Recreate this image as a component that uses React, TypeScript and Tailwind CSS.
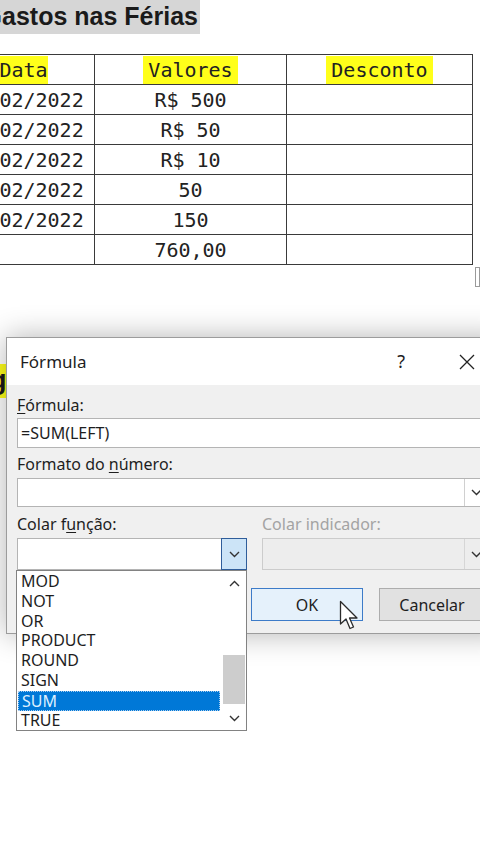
import React from "react";

const mono = { fontFamily: '"DejaVu Sans Mono", "Liberation Mono", monospace' };
const ui = { fontFamily: '"Noto Sans", "Open Sans", sans-serif' };
const titulo = { fontFamily: '"Liberation Sans", Arial, sans-serif' };

const rows = [
  { data: "01/02/2022", valor: "R$ 500" },
  { data: "05/02/2022", valor: "R$ 50" },
  { data: "09/02/2022", valor: "R$ 10" },
  { data: "14/02/2022", valor: "50" },
  { data: "20/02/2022", valor: "150" },
  { data: "", valor: "760,00" },
];

const funcoes = ["MOD", "NOT", "OR", "PRODUCT", "ROUND", "SIGN", "SUM", "TRUE"];

const Chevron: React.FC<{ up?: boolean; className?: string }> = ({ up, className }) => (
  <svg width="11" height="7" viewBox="0 0 11 7" className={className}>
    <path
      d={up ? "M1 6 L5.5 1.5 L10 6" : "M1 1 L5.5 5.5 L10 1"}
      fill="none"
      stroke="#333"
      strokeWidth="1.4"
    />
  </svg>
);

const Planilha: React.FC = () => (
  <div>
    <div className="flex justify-end overflow-hidden w-[200px] h-[34px] bg-[#d6d6d6] items-center">
      <span className="text-[25px] font-bold text-[#1a1a1a] whitespace-nowrap pr-[2px] shrink-0" style={titulo}>
        Gastos nas Férias
      </span>
    </div>

    <div className="mt-[20px] flex items-end">
      <table className="table-fixed w-[520px] border-collapse ml-[-48px] text-[20px] leading-[24px] text-[#222]" style={mono}>
        <colgroup>
          <col className="w-[142px]" />
          <col className="w-[192px]" />
          <col className="w-[186px]" />
        </colgroup>
        <thead>
          <tr className="h-[30px]">
            <th className="border border-[#3a3a3a] font-normal p-0">
              <span className="bg-[#ffff1a] py-[2px]">Data</span>
            </th>
            <th className="border border-[#3a3a3a] font-normal p-0">
              <span className="bg-[#ffff1a] px-[5px] py-[2px]">Valores</span>
            </th>
            <th className="border border-[#3a3a3a] font-normal p-0">
              <span className="bg-[#ffff1a] px-[5px] py-[2px]">Desconto</span>
            </th>
          </tr>
        </thead>
        <tbody>
          {rows.map((r, i) => (
            <tr key={i} className="h-[30px]">
              <td className="border border-[#3a3a3a] p-0 text-center whitespace-nowrap">{r.data}</td>
              <td className="border border-[#3a3a3a] p-0 text-center whitespace-nowrap">{r.valor}</td>
              <td className="border border-[#3a3a3a] p-0"></td>
            </tr>
          ))}
        </tbody>
      </table>
      <div className="ml-[2px] mb-[-22px] w-[8px] h-[20px] border border-[#9a9a9a] bg-white" />
    </div>
  </div>
);

const Dialogo: React.FC = () => (
  <div
    className="absolute left-[6px] top-[337px] w-[500px] h-[297px] border border-[#9c9c9c] bg-[#f0f0f0] shadow-[0_0_28px_rgba(0,0,0,0.3)] text-[16px] text-[#1e1e1e]"
    style={ui}
  >
    {/* barra de título */}
    <div className="h-[47px] bg-white flex items-center pl-[13px] pr-[30px]">
      <span className="text-[17px] flex-1">Fórmula</span>
      <span className="text-[18px] mr-[54px]">?</span>
      <svg width="16" height="16" viewBox="0 0 16 16">
        <path d="M1 1 L15 15 M15 1 L1 15" stroke="#222" strokeWidth="1.3" />
      </svg>
    </div>

    <div className="pl-[10px] pt-[10px]">
      <div className="leading-[20px]">
        <span className="underline underline-offset-2">F</span>órmula:
      </div>
      <div className="mt-[3px] h-[30px] bg-white border border-[#b4b4b4] flex items-center pl-[3px]">
        =SUM(LEFT)
      </div>

      <div className="mt-[6px] leading-[20px]">
        Formato do <span className="underline underline-offset-2">n</span>úmero:
      </div>
      <div className="mt-[4px] h-[29px] bg-white border border-[#b4b4b4] flex justify-end">
        <div className="w-[40px] border-l border-[#d0d0d0] flex items-center pl-[6px]">
          <Chevron />
        </div>
      </div>

      <div className="mt-[7px] flex leading-[20px]">
        <div className="w-[245px]">
          Colar f<span className="underline underline-offset-2">u</span>nção:
        </div>
        <div className="text-[#a3a3a3]">Colar indicador:</div>
      </div>

      <div className="mt-[4px] flex">
        <div className="w-[230px] h-[32px] bg-white border border-[#b4b4b4] flex justify-end">
          <div className="w-[26px] bg-[#cce4f7] border border-[#2f5d9a] flex items-center justify-center mt-[-1px] mr-[-1px] h-[32px]">
            <Chevron />
          </div>
        </div>
        <div className="ml-[15px] flex-1 h-[32px] bg-[#ededed] border border-[#cccccc] flex justify-end">
          <div className="w-[40px] border-l border-[#d6d6d6] flex items-center pl-[6px]">
            <Chevron />
          </div>
        </div>
      </div>

      <div className="mt-[18px] flex">
        <div className="ml-[234px] w-[112px] h-[33px] bg-[#e5f1fb] border border-[#3d7bc8] flex items-center justify-center">
          OK
        </div>
        <div className="ml-[16px] w-[120px] h-[33px] bg-[#e1e1e1] border border-[#adadad] flex items-center justify-center pr-[14px]">
          Cancelar
        </div>
      </div>
    </div>
  </div>
);

const ListaFuncoes: React.FC = () => (
  <div
    className="absolute left-[16px] top-[570px] w-[231px] h-[161px] bg-white border border-[#828282] flex text-[16px] text-[#1e1e1e]"
    style={ui}
  >
    <div className="flex-1 pt-[1px]">
      {funcoes.map((f) => (
        <div
          key={f}
          className={
            f === "SUM"
              ? "h-[19.8px] leading-[18px] pl-[3px] bg-[#0078d7] text-[#dcefff] border border-dotted border-[#a8cdf0] ml-[1px] mr-[2px]"
              : "h-[19.8px] leading-[19.8px] pl-[4px]"
          }
        >
          {f}
        </div>
      ))}
    </div>
    <div className="w-[24px] flex flex-col items-center bg-white">
      <div className="h-[24px] flex items-center justify-center">
        <Chevron up />
      </div>
      <div className="flex-1 w-full flex flex-col justify-end">
        <div className="h-[49px] w-[22px] ml-[1px] bg-[#cdcdcd] mb-[2px]" />
      </div>
      <div className="h-[24px] flex items-center justify-center">
        <Chevron />
      </div>
    </div>
  </div>
);

const Cursor: React.FC = () => (
  <svg
    className="absolute left-[339px] top-[600px]"
    width="20"
    height="32"
    viewBox="0 0 20 32"
  >
    <path
      d="M1.5 1.5 L1.5 24 L7 19 L11 28.5 L14.5 27 L10.5 18 L18 18 Z"
      fill="#ffffff"
      stroke="#2a2a2a"
      strokeWidth="1.3"
      strokeLinejoin="round"
    />
  </svg>
);

const App: React.FC = () => {
  return (
    <div className="relative w-[480px] h-[854px] overflow-hidden bg-white">
      <Planilha />

      {/* pedaço do título de baixo, coberto pela caixa de diálogo */}
      <div className="absolute left-0 top-[364px] w-[8px] h-[34px] bg-[#ffff1a] overflow-hidden">
        <span className="absolute left-[-10px] top-[-4px] text-[27px] font-bold text-[#1a1a1a]" style={titulo}>
          g
        </span>
      </div>

      <Dialogo />
      <ListaFuncoes />
      <Cursor />
    </div>
  );
};

export default App;
